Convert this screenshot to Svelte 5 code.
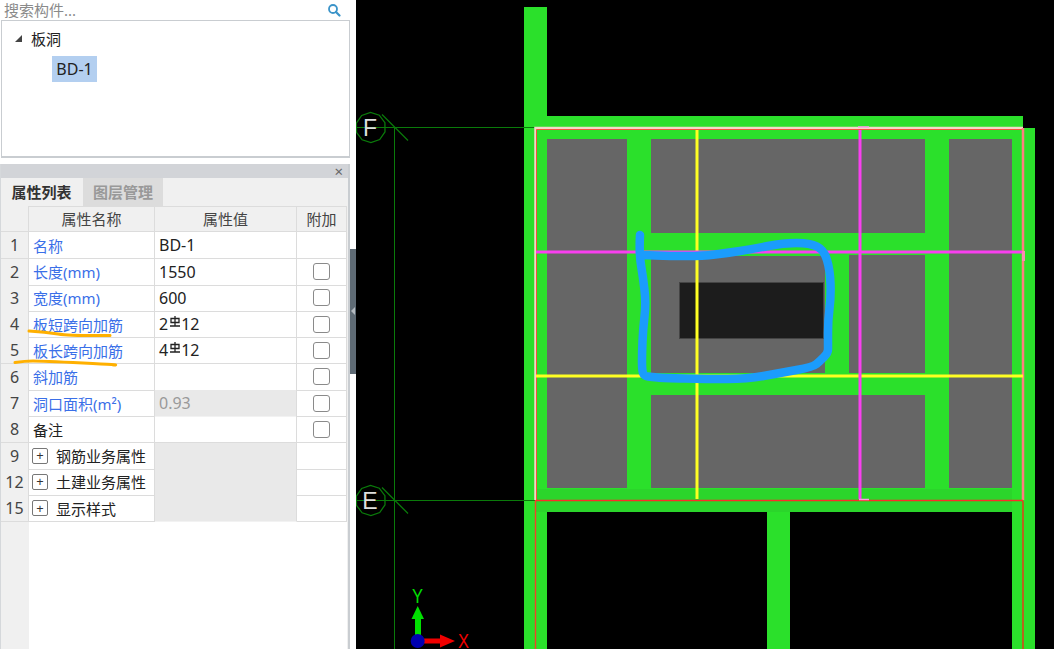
<script>
  // Property rows for the 属性列表 grid
  const rows = [
    { no: 1, name: '名称', value: 'BD-1', link: true },
    { no: 2, name: '长度(mm)', value: '1550', link: true, check: true },
    { no: 3, name: '宽度(mm)', value: '600', link: true, check: true },
    { no: 4, name: '板短跨向加筋', count: '2', dia: '12', link: true, check: true },
    { no: 5, name: '板长跨向加筋', count: '4', dia: '12', link: true, check: true },
    { no: 6, name: '斜加筋', value: '', link: true, check: true },
    { no: 7, name: '洞口面积(m²)', value: '0.93', link: true, check: true, locked: true },
    { no: 8, name: '备注', value: '', check: true },
    { no: 9, name: '钢筋业务属性', group: true },
    { no: 12, name: '土建业务属性', group: true },
    { no: 15, name: '显示样式', group: true }
  ];

  const greys = [
    [547, 139, 80, 349],
    [651, 139, 274, 94],
    [651, 256, 174, 117],
    [849, 255, 76, 118],
    [651, 395, 274, 93],
    [949, 139, 63, 349]
  ];

  const axes = [
    { label: 'F', y: 127.5 },
    { label: 'E', y: 500.5 }
  ];

  // Marker ring, traced by hand off the reference
  const ring = [
    [640, 235], [639, 253], [643, 277], [646, 303], [643, 330], [642, 353], [642, 370],
    [644, 376], [652, 377], [663, 378], [707, 379], [747, 379], [780, 373], [813, 367],
    [820, 361], [828, 353], [828, 346], [828, 320], [831, 297], [830, 270], [824, 250],
    [810, 243], [783, 243], [753, 249], [727, 253], [703, 256], [670, 256], [642, 255]
  ];

  function smooth(pts) {
    let d = `M${pts[0][0]} ${pts[0][1]}`;
    for (let i = 1; i < pts.length - 1; i++) {
      const mx = (pts[i][0] + pts[i + 1][0]) / 2;
      const my = (pts[i][1] + pts[i + 1][1]) / 2;
      d += ` Q${pts[i][0]} ${pts[i][1]} ${mx} ${my}`;
    }
    const last = pts[pts.length - 1];
    return `${d} L${last[0]} ${last[1]}`;
  }

  function decagon(cx, cy, r) {
    const pts = [];
    for (let i = 0; i < 10; i++) {
      const a = (Math.PI * 2 * i) / 10 + 0.3;
      pts.push(`${(cx + r * Math.cos(a)).toFixed(1)},${(cy + r * Math.sin(a)).toFixed(1)}`);
    }
    return pts.join(' ');
  }
</script>

<div class="page">
  <aside class="side">
    <div class="search">
      <span class="search-text">搜索构件...</span>
      <svg class="search-icon" viewBox="0 0 14 14" fill="none" stroke="#3b94c9" aria-hidden="true">
        <circle cx="6" cy="6" r="4" stroke-width="1.8" />
        <line x1="9" y1="9" x2="12.5" y2="12.5" stroke-width="2.2" stroke-linecap="round" />
      </svg>
    </div>

    <div class="tree">
      <div class="tree-root">
        <span class="tree-arrow"></span>
        <span>板洞</span>
      </div>
      <div class="tree-leaf">BD-1</div>
    </div>

    <section class="props">
      <div class="props-title"><span class="close">×</span></div>
      <div class="tabs">
        <div class="tab active">属性列表</div>
        <div class="tab">图层管理</div>
      </div>

      <div class="grid">
        <div class="row head">
          <div class="no"></div>
          <div class="cell center">属性名称</div>
          <div class="cell center">属性值</div>
          <div class="cell center">附加</div>
        </div>
        {#each rows as r (r.no)}
          <div class="row">
            <div class="no">{r.no}</div>
            <div class="cell name" class:link={r.link}>
              {#if r.group}<span class="plus">+</span>{/if}
              {r.name}
            </div>
            <div class="cell value" class:locked={r.locked || r.group}>
              {#if r.count}
                {r.count}<svg class="rebar" viewBox="0 0 12 11" fill="none" stroke="#222" stroke-width="1.3" aria-hidden="true">
                  <path d="M2 2.5H10V6.5H2ZM6 0V10M1 10H11" />
                </svg>{r.dia}
              {:else}
                {r.value ?? ''}
              {/if}
            </div>
            <div class="cell center">
              {#if r.check}<span class="check"></span>{/if}
            </div>
          </div>
        {/each}
        <div class="rest"></div>
      </div>

      <svg class="marks" viewBox="0 0 350 649" fill="none" stroke="#ffb000" stroke-width="3" stroke-linecap="round" aria-hidden="true">
        <path d="M29 331 Q45 332 58 334 T110 335.5" />
        <path d="M15 362.5 Q25 361 33 361 T83 363 T113 365" />
      </svg>
    </section>
  </aside>

  <div class="handle"><span class="grip"></span></div>

  <svg class="canvas" viewBox="356 0 698 649" aria-label="CAD 视图">
    <!-- slab and beams -->
    <g fill="#2be02b">
      <rect x="524" y="7" width="23" height="642" />
      <rect x="524" y="116" width="499" height="12" />
      <rect x="524" y="128" width="511" height="384" />
      <rect x="767" y="512" width="23" height="137" />
      <rect x="1012" y="512" width="23" height="137" />
    </g>
    <rect x="536" y="489" width="476" height="23" fill="#2bd52b" />
    {#each greys as [x, y, w, h]}
      <rect {x} {y} width={w} height={h} fill="#666" />
    {/each}
    <rect x="679.5" y="282.5" width="144" height="56" fill="#1c1c1c" stroke="#444" />

    <!-- grid axes -->
    <g stroke="#0a7a0a" fill="none">
      <line x1="394.5" y1="128" x2="394.5" y2="649" />
      {#each axes as a}
        <line x1="357" y1={a.y} x2="535" y2={a.y} />
        <line x1="382" y1={a.y - 13} x2="408" y2={a.y + 13} stroke-width="1.3" />
        <polygon points={decagon(370.7, a.y, 15)} stroke-width="1.3" />
        <text class="axis-label" x="370" y={a.y + 8.5} text-anchor="middle">{a.label}</text>
      {/each}
    </g>

    <!-- opening boundary -->
    <path d="M535.5 500V128H1023" fill="none" stroke="#f3d8c8" stroke-width="2.5" />
    <path d="M536.5 500V129.5H1022" fill="none" stroke="#f4553c" />
    <line x1="535.5" y1="500" x2="535.5" y2="649" stroke="#f4402a" stroke-width="1.4" />
    <line x1="1023" y1="128" x2="1023" y2="500" stroke="#ff7f7f" stroke-width="2.5" />
    <line x1="1023" y1="501" x2="1023" y2="649" stroke="#b5651d" stroke-width="2" />
    <line x1="536" y1="500.5" x2="1023" y2="500.5" stroke="#ff2a2a" stroke-width="1.3" />

    <!-- reinforcement lines -->
    <line x1="697" y1="130" x2="697" y2="499" stroke="#ffff22" stroke-width="3" />
    <line x1="536" y1="376" x2="1023" y2="376" stroke="#ffff22" stroke-width="3" />
    <line x1="860" y1="130" x2="860" y2="499" stroke="#f93ff0" stroke-width="3" />
    <line x1="536" y1="252" x2="1022" y2="252" stroke="#f93ff0" stroke-width="3" />
    <line x1="858" y1="127" x2="869" y2="127" stroke="#ff9ae8" stroke-width="1.5" />
    <line x1="859" y1="499.5" x2="869" y2="499.5" stroke="#ff9ae8" stroke-width="1.5" />
    <line x1="1023.5" y1="251" x2="1023.5" y2="261" stroke="#f88fb0" stroke-width="3" />

    <!-- hand-drawn ring -->
    <path
      d={smooth(ring)}
      fill="none"
      stroke="#1b9cfc"
      stroke-width="8.5"
      stroke-linecap="round"
      stroke-linejoin="round"
    />

    <!-- UCS icon -->
    <rect x="415" y="617" width="6" height="18" fill="#00e000" />
    <polygon points="417.7,606 424,619 411.5,619" fill="#00e000" />
    <rect x="424" y="638.5" width="17" height="5" fill="#f00000" />
    <polygon points="455,641 440,634.5 440,647.5" fill="#f00000" />
    <circle cx="417.7" cy="641" r="7" fill="#0000b0" />
    <text class="ucs" x="412" y="603" textLength="11" lengthAdjust="spacingAndGlyphs" fill="#00e000">Y</text>
    <text class="ucs" x="458" y="648" textLength="11" lengthAdjust="spacingAndGlyphs" fill="#f00000">X</text>
  </svg>
</div>

<style>
  :global(body) {
    background: #fff;
  }

  .page {
    display: flex;
    width: 1054px;
    height: 649px;
    overflow: hidden;
    font-family: "Noto Sans", "Noto Sans CJK SC", sans-serif;
    font-size: 15px;
    color: #222;
  }

  .side {
    width: 350px;
    flex-shrink: 0;
    display: flex;
    flex-direction: column;
    background: #fff;
  }

  .search {
    height: 20px;
    display: flex;
    align-items: center;
    justify-content: space-between;
    padding: 0 9px 0 4px;
  }
  .search-text {
    color: #8a8a8a;
    line-height: 20px;
  }
  .search-icon {
    width: 14px;
    height: 14px;
  }

  .tree {
    height: 138px;
    box-sizing: border-box;
    margin-left: 1px;
    border: 1px solid #c9cdd1;
    border-bottom-width: 2px;
    padding: 6px 0 0 13px;
  }
  .tree-root {
    display: flex;
    align-items: center;
    gap: 9px;
    height: 22px;
  }
  .tree-arrow {
    width: 0;
    height: 0;
    border-left: 7px solid transparent;
    border-bottom: 7px solid #444;
  }
  .tree-leaf {
    width: 45px;
    height: 26px;
    line-height: 26px;
    margin: 7px 0 0 37px;
    text-align: center;
    font-size: 16px;
    background: #b3cff0;
  }

  .props {
    margin-top: 6px;
    flex: 1;
    display: flex;
    flex-direction: column;
    border-left: 1px solid #d5d8db;
    border-right: 2px solid #c9cdd1;
    background: #f0f0f0;
    min-height: 0;
  }
  .props-title {
    height: 14px;
    background: #d2d4d8;
    display: flex;
    align-items: center;
    justify-content: flex-end;
    padding-right: 5px;
    flex-shrink: 0;
  }
  .close {
    font-size: 15px;
    line-height: 14px;
    color: #666;
  }

  .tabs {
    display: flex;
    height: 28px;
    gap: 1px;
    flex-shrink: 0;
  }
  .tab {
    width: 80px;
    line-height: 28px;
    text-align: center;
    background: #dcdcdc;
    color: #999;
    font-weight: 700;
  }
  .tab.active {
    width: 81px;
    background: #f0f0f0;
    color: #333;
  }

  .grid {
    flex: 1;
    display: flex;
    flex-direction: column;
    background: #fff;
    margin-right: 1px;
    min-height: 0;
  }
  .row {
    display: grid;
    grid-template-columns: 28px 126px 142px 50px;
    height: 26.3px;
    flex-shrink: 0;
  }
  .row.head {
    background: #f0f0f0;
    box-shadow: inset 0 1px #dcdcdc;
    color: #444;
  }
  .no {
    background: #f0f0f0;
    text-align: center;
    line-height: 26px;
    color: #444;
    box-sizing: border-box;
    border-right: 1px solid #dcdcdc;
    border-bottom: 1px solid #dcdcdc;
    font-size: 16px;
  }
  .cell {
    display: flex;
    align-items: center;
    padding-left: 4px;
    box-sizing: border-box;
    border-right: 1px solid #dcdcdc;
    border-bottom: 1px solid #dcdcdc;
    white-space: nowrap;
  }
  .cell.center {
    justify-content: center;
    padding-left: 0;
  }
  .cell.name {
    gap: 8px;
  }
  .cell.value {
    font-size: 16px;
  }
  .link {
    color: #3a6fe8;
  }
  .locked {
    background: #e9e9e9;
    color: #999;
    border-bottom-color: #f2f2f2;
  }
  .plus {
    width: 16px;
    height: 16px;
    box-sizing: border-box;
    margin-left: -1px;
    border: 1px solid #777;
    border-radius: 2px;
    display: flex;
    align-items: center;
    justify-content: center;
    font-size: 13px;
    line-height: 1;
    color: #333;
  }
  .check {
    width: 17px;
    height: 17px;
    box-sizing: border-box;
    border: 1px solid #8a8a8a;
    border-radius: 3px;
    background: #fff;
  }
  .rebar {
    width: 12px;
    height: 11px;
    margin: 0 0 5px 1px;
  }
  .rest {
    flex: 1;
    background: linear-gradient(to right, #f0f0f0 28px, #fff 28px);
  }

  .marks {
    position: absolute;
    left: 0;
    top: 0;
    width: 350px;
    height: 649px;
    pointer-events: none;
  }

  .handle {
    width: 6px;
    flex-shrink: 0;
    background: #fff;
    padding-top: 249px;
    box-sizing: border-box;
  }
  .grip {
    display: block;
    position: relative;
    height: 125px;
    background: #5f6b75;
  }
  .grip::after {
    content: "";
    position: absolute;
    left: 1px;
    top: 58px;
    border-top: 4px solid transparent;
    border-bottom: 4px solid transparent;
    border-right: 4px solid #b4bac0;
  }

  .canvas {
    flex: 1;
    height: 649px;
    background: #000;
    display: block;
  }
  .axis-label {
    font-family: "Liberation Sans", sans-serif;
    font-size: 23px;
    fill: #dedede;
    stroke: none;
  }
  .ucs {
    font-family: "Liberation Sans", sans-serif;
    font-size: 20px;
  }
</style>
